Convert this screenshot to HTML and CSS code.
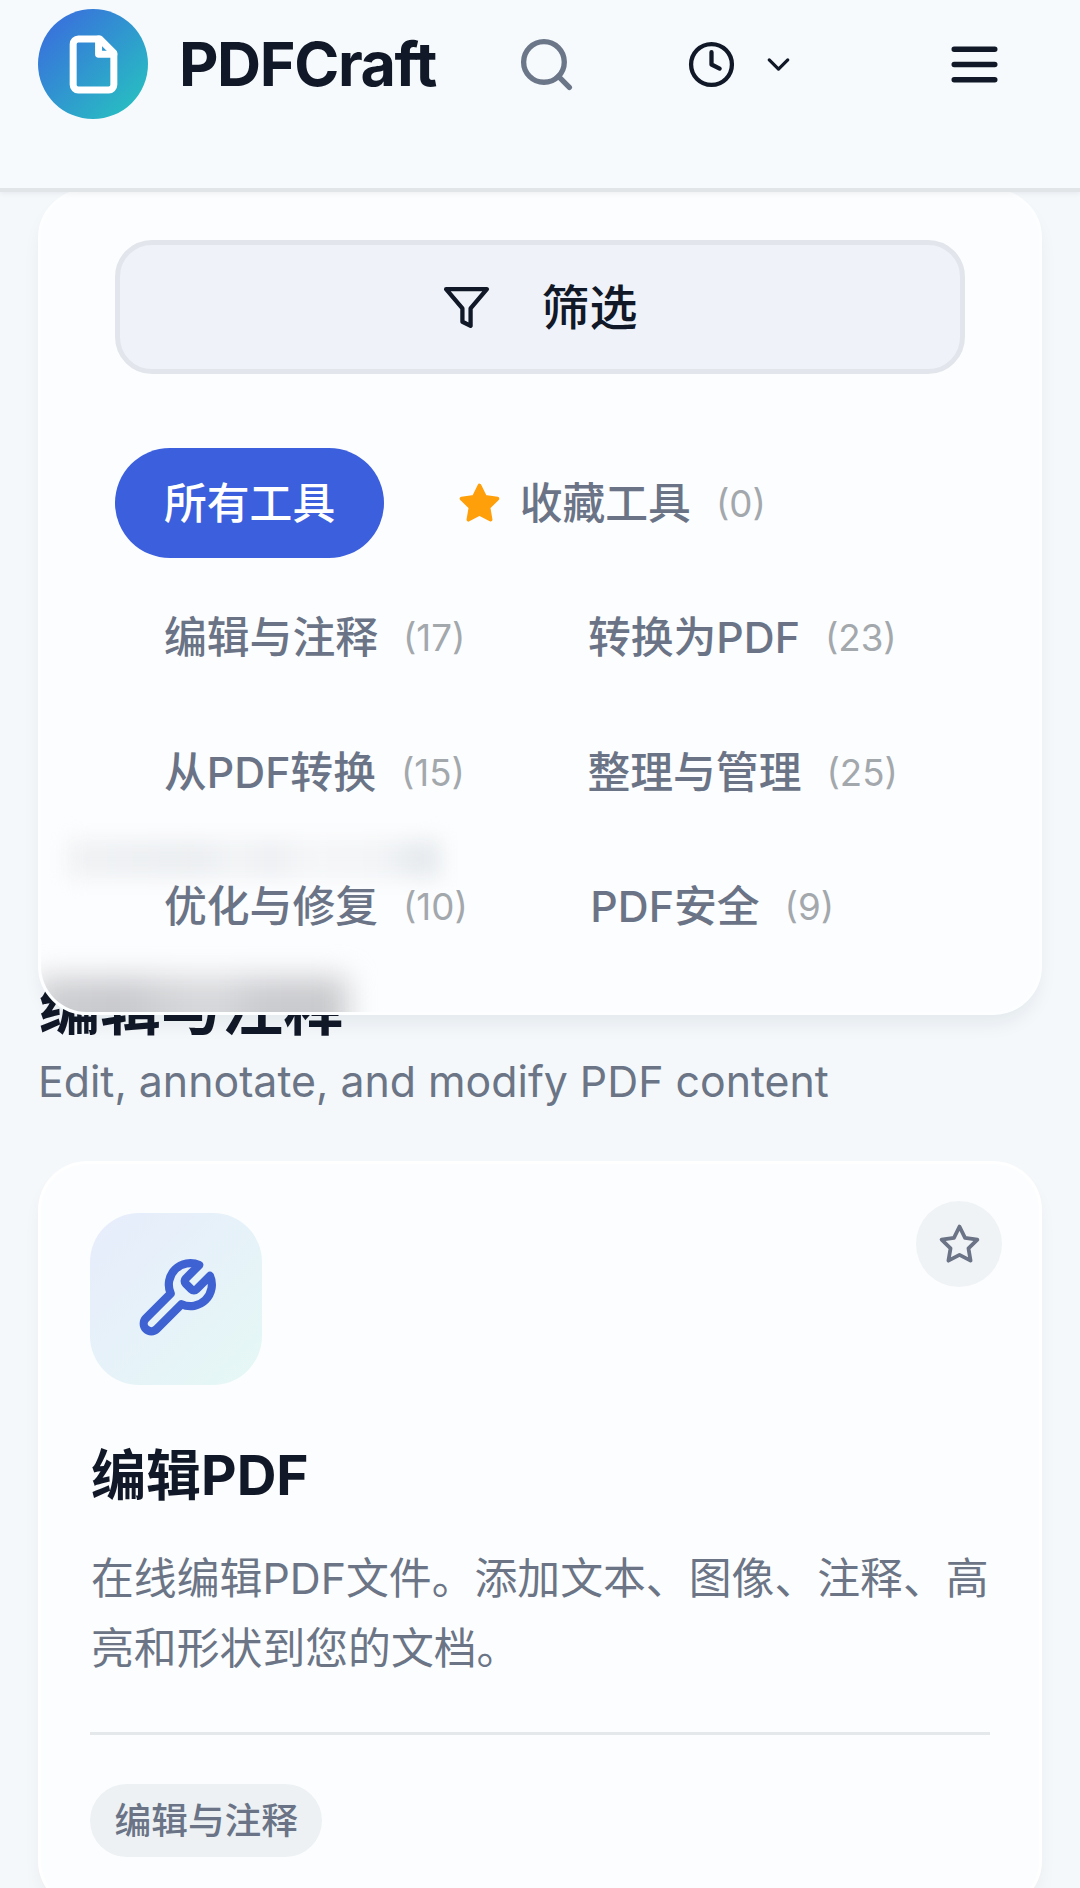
FILE: index.html
```html
<!DOCTYPE html>
<html lang="zh-CN">
<head>
    <meta charset="UTF-8">
    <meta name="viewport" content="width=device-width, initial-scale=1.0">
    <title>PDFCraft</title>
    <link rel="stylesheet" href="styles.css">
</head>
<body>
    <header class="header">
        <a class="brand">
            <span class="logo">
                <svg class="icon" width="61" height="61" viewBox="0 0 24 24"><path d="M14.5 2H6a2 2 0 0 0-2 2v16a2 2 0 0 0 2 2h12a2 2 0 0 0 2-2V7.5L14.5 2z"/><path d="M14 2v6h6"/></svg>
            </span>
            <span class="brand-name">PDFCraft</span>
        </a>
        <button class="icon-button search">
            <svg class="icon" width="61" height="61" viewBox="0 0 24 24"><circle cx="11" cy="11" r="8"/><path d="m21 21-4.3-4.3"/></svg>
        </button>
        <button class="icon-button history">
            <svg class="icon" width="49" height="49" viewBox="0 0 24 24"><circle cx="12" cy="12" r="10"/><path d="M12 6v6l4 2"/></svg>
            <svg class="icon" width="37" height="37" viewBox="0 0 24 24"><path d="m6 9 6 6 6-6"/></svg>
        </button>
        <button class="icon-button menu">
            <svg class="icon" width="61" height="61" viewBox="0 0 24 24"><path d="M4 6h16M4 12h16M4 18h16"/></svg>
        </button>
    </header>

    <main class="main">
        <div class="filter-panel">
            <div class="frost">
                <div class="frost-line"></div>
                <div class="frost-title"></div>
            </div>
            <button class="filter-button">
                <svg class="icon" width="49" height="49" viewBox="0 0 24 24"><path d="M22 3H2l8 9.46V19l4 2v-8.54L22 3z"/></svg>
                <span class="label">筛选</span>
            </button>
            <div class="categories">
                <button class="category active"><span class="label">所有工具</span></button>
                <button class="category">
                    <svg class="icon favorite" width="43" height="43" viewBox="0 0 24 24"><path d="m12 2 3.09 6.26L22 9.27l-5 4.87 1.18 6.88L12 17.77l-6.18 3.25L7 14.14 2 9.27l6.91-1.01L12 2z"/></svg>
                    <span class="label">收藏工具</span><span class="count">(0)</span>
                </button>
                <button class="category"><span class="label">编辑与注释</span><span class="count">(17)</span></button>
                <button class="category"><span class="label">转换为PDF</span><span class="count">(23)</span></button>
                <button class="category"><span class="label">从PDF转换</span><span class="count">(15)</span></button>
                <button class="category"><span class="label">整理与管理</span><span class="count">(25)</span></button>
                <button class="category"><span class="label">优化与修复</span><span class="count">(10)</span></button>
                <button class="category"><span class="label">PDF安全</span><span class="count">(9)</span></button>
            </div>
        </div>

        <section class="tools">
            <h2 class="section-title">编辑与注释</h2>
            <p class="section-text">Edit, annotate, and modify PDF content</p>

            <article class="card">
                <div class="card-top">
                    <div class="tile">
                        <svg class="icon" width="86" height="86" viewBox="0 0 24 24"><path d="M14.7 6.3a1 1 0 0 0 0 1.4l1.6 1.6a1 1 0 0 0 1.4 0l3.77-3.77a6 6 0 0 1-7.94 7.94l-6.91 6.91a2.12 2.12 0 0 1-3-3l6.91-6.91a6 6 0 0 1 7.94-7.94l-3.76 3.76z"/></svg>
                    </div>
                    <button class="star-button">
                        <svg class="icon" width="43" height="43" viewBox="0 0 24 24"><path d="m12 2 3.09 6.26L22 9.27l-5 4.87 1.18 6.88L12 17.77l-6.18 3.25L7 14.14 2 9.27l6.91-1.01L12 2z"/></svg>
                    </button>
                </div>
                <h3 class="card-title">编辑PDF</h3>
                <p class="card-text">在线编辑PDF文件。添加文本、图像、注释、高亮和形状到您的文档。</p>
                <div class="card-footer">
                    <span class="tag"><span class="label">编辑与注释</span></span>
                </div>
            </article>
        </section>
    </main>
</body>
</html>
```
FILE: styles.css
```css
* {
    box-sizing: border-box;
}

body {
    margin: 0;
    height: 1888px;
    overflow: hidden;
    font-family: Inter, "Noto Sans CJK SC", sans-serif;
    color: #111827;
    background: #f4f8fb;
}

button {
    border: none;
    padding: 0;
    background: none;
    font: inherit;
    color: inherit;
}

h2, h3, p {
    margin: 0;
}

.icon {
    display: block;
    flex-shrink: 0;
    fill: none;
    stroke: currentColor;
    stroke-width: 2.1;
    stroke-linecap: round;
    stroke-linejoin: round;
}

.label {
    margin-bottom: 7px;
}

/* Header */
.header {
    position: relative;
    z-index: 3;
    display: flex;
    align-items: center;
    height: 192px;
    padding: 0 75px 60px 38px;
    background: #f6fafd;
    border-bottom: 4px solid #e1e5e8;
    box-shadow: 0 2px 5px rgba(15, 23, 42, 0.05);
}

.brand {
    display: flex;
    align-items: center;
    gap: 31px;
    width: 478px;
}

.logo {
    display: flex;
    align-items: center;
    justify-content: center;
    width: 110px;
    height: 110px;
    border-radius: 50%;
    color: white;
    background: linear-gradient(135deg, #3b66e0, #25c8be);
}

.logo .icon {
    stroke-width: 2.75;
}

.brand-name {
    font-size: 61px;
    font-weight: 700;
    letter-spacing: -1.4px;
}

.icon-button {
    display: flex;
    align-items: center;
}

.search {
    color: #6b7688;
}

.history {
    gap: 24px;
    margin-left: 110px;
}

.menu {
    margin-left: auto;
}

.main {
    padding: 0 38px;
}

/* Filter panel */
.filter-panel {
    position: relative;
    z-index: 2;
    height: 826px;
    margin-top: -3px;
    padding: 48px 74px;
    border: 3px solid #fdfeff;
    border-radius: 49px;
    background: #fcfdfe;
    box-shadow: 0 12px 20px -4px rgba(15, 23, 42, 0.07);
}

/* Frosted shadow of the text that has scrolled under the panel */
.frost {
    position: absolute;
    inset: 0;
    z-index: -1;
    overflow: hidden;
    border-radius: 46px;
}

.frost-line,
.frost-title {
    position: absolute;
    filter: blur(10px);
}

.frost-line {
    top: 648px;
    left: 26px;
    width: 374px;
    height: 38px;
    background: linear-gradient(90deg, #f0f2f4, #ebeef1 35%, #f2f4f6 45%, #edeff2 55%, #f5f6f8 65%, #f2f4f6 84%, #e6eaee 94%);
}

.frost-title {
    top: 785px;
    left: -6px;
    width: 312px;
    height: 80px;
    background: linear-gradient(90deg, #cfd0d3, #c8c9cd 28%, #d4d5d8 45%, #d8d9dc 58%, #cbccd0 72%, #c9cacd 95%);
    filter: blur(14px);
}

.filter-button {
    display: flex;
    align-items: center;
    justify-content: center;
    gap: 50px;
    width: 100%;
    height: 134px;
    margin-bottom: 74px;
    border: 5px solid #e2e6ec;
    border-radius: 37px;
    background: #eff3f9;
    font-size: 48px;
    font-weight: 500;
}

.categories {
    display: flex;
    flex-wrap: wrap;
    gap: 24.5px;
}

.category {
    display: flex;
    align-items: center;
    height: 110px;
    padding: 0 49px;
    border-radius: 55px;
    font-size: 42.8px;
    font-weight: 500;
    color: #6a7486;
}

.category.active {
    color: white;
    background: #3b5fdd;
}

.favorite {
    margin-right: 19px;
    color: #ff9f0a;
    fill: currentColor;
}

.count {
    margin-left: 25px;
    font-size: 36.7px;
    font-weight: 400;
    color: #a3a8ad;
}

/* Tools, scrolled partly under the filter panel */
.tools {
    margin-top: -50px;
}

.section-title {
    margin-left: 1px;
    font-size: 61px;
    line-height: 86px;
    font-weight: 700;
}

.section-text {
    font-size: 42.85px;
    line-height: 60px;
    color: #6b7586;
}

.card {
    height: 749px;
    margin-top: 50px;
    padding: 49px;
    border: 3px solid rgba(255, 255, 255, 0.8);
    border-radius: 49px;
    background: #fcfdfe;
    box-shadow: 0 12px 20px -4px rgba(15, 23, 42, 0.06);
}

.card-top {
    display: flex;
    justify-content: space-between;
    margin-bottom: 55px;
}

.tile {
    display: flex;
    align-items: center;
    justify-content: center;
    width: 172px;
    height: 172px;
    border-radius: 49px;
    color: #3f62d3;
    background: linear-gradient(135deg, #e7ecfc, #e5f8f5);
}

.tile .icon {
    stroke-width: 2.3;
}

.star-button {
    display: flex;
    align-items: center;
    justify-content: center;
    width: 86px;
    height: 86px;
    margin: -12px -12px 0 0;
    border-radius: 50%;
    color: #6a7486;
    background: #f0f3f6;
}

.card-title {
    margin: 0 0 34px 1px;
    font-size: 55px;
    line-height: 70px;
    font-weight: 700;
}

.card-text {
    margin: 0 -4px 0 1px;
    font-size: 42.85px;
    line-height: 69.8px;
    color: #6b7586;
}

.card-footer {
    margin-top: 48px;
    padding-top: 49px;
    border-top: 3px solid #e4e8eb;
}

.tag {
    display: inline-flex;
    align-items: center;
    height: 73px;
    padding: 0 24.5px;
    border-radius: 37px;
    font-size: 36.7px;
    font-weight: 500;
    color: #6a7486;
    background: #edf1f4;
}

.tag .label {
    margin-bottom: 4px;
}
```
